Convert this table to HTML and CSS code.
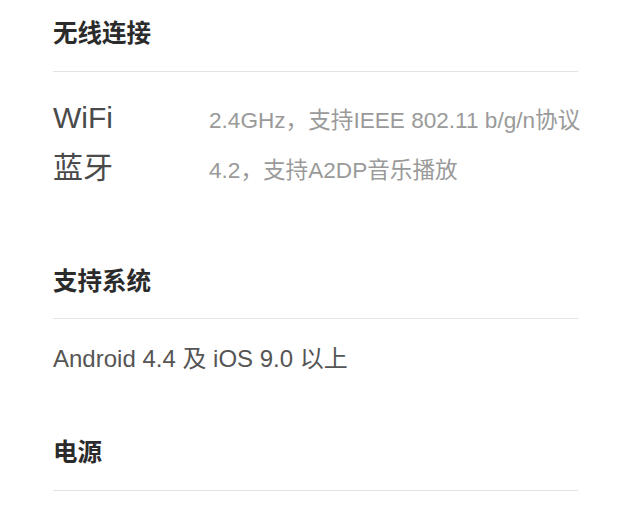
FILE: index.html
```html
<!DOCTYPE html>
<html lang="zh-CN">
<head>
<meta charset="utf-8">
<link rel="stylesheet" href="styles.css">
</head>
<body>
<main class="page">
  <section class="section section-wireless">
    <h2 class="section-title">无线连接</h2>
    <dl class="spec-list">
      <div class="spec-row">
        <dt class="spec-label">WiFi</dt>
        <dd class="spec-value">2.4GHz，支持IEEE 802.11 b/g/n协议</dd>
      </div>
      <div class="spec-row">
        <dt class="spec-label">蓝牙</dt>
        <dd class="spec-value">4.2，支持A2DP音乐播放</dd>
      </div>
    </dl>
  </section>
  <section class="section section-system">
    <h2 class="section-title">支持系统</h2>
    <p class="section-text">Android 4.4 及 iOS 9.0 以上</p>
  </section>
  <section class="section section-power">
    <h2 class="section-title">电源</h2>
  </section>
</main>
</body>
</html>
```
FILE: styles.css
```css
html, body {
  margin: 0;
  padding: 0;
  background: #ffffff;
}
body {
  font-family: "Liberation Sans", "Noto Sans CJK SC", sans-serif;
}
.page {
  padding-left: 53px;
  width: 525px;
}
.section-title {
  margin: 0;
  font-size: 24.5px;
  font-weight: bold;
  line-height: 32px;
  color: #2b2b2b;
  padding-bottom: 21px;
  border-bottom: 1px solid #e3e3e3;
}
.section-wireless {
  padding-top: 18px;
}
.spec-list {
  margin: 0;
  padding-top: 21px;
}
.spec-row {
  display: flex;
  align-items: baseline;
  height: 50px;
  line-height: 50px;
}
.spec-label {
  flex: 0 0 156px;
  font-size: 30px;
  color: #4a4a4a;
}
.spec-value {
  margin: 0;
  font-size: 22.6px;
  color: #9a9a9a;
  white-space: nowrap;
}
.section-system {
  margin-top: 73px;
}
.section-system .section-title {
  padding-bottom: 20px;
}
.section-text {
  margin: 0;
  padding-top: 25px;
  font-size: 24px;
  line-height: 30px;
  color: #555555;
}
.section-power {
  margin-top: 63px;
}
```
